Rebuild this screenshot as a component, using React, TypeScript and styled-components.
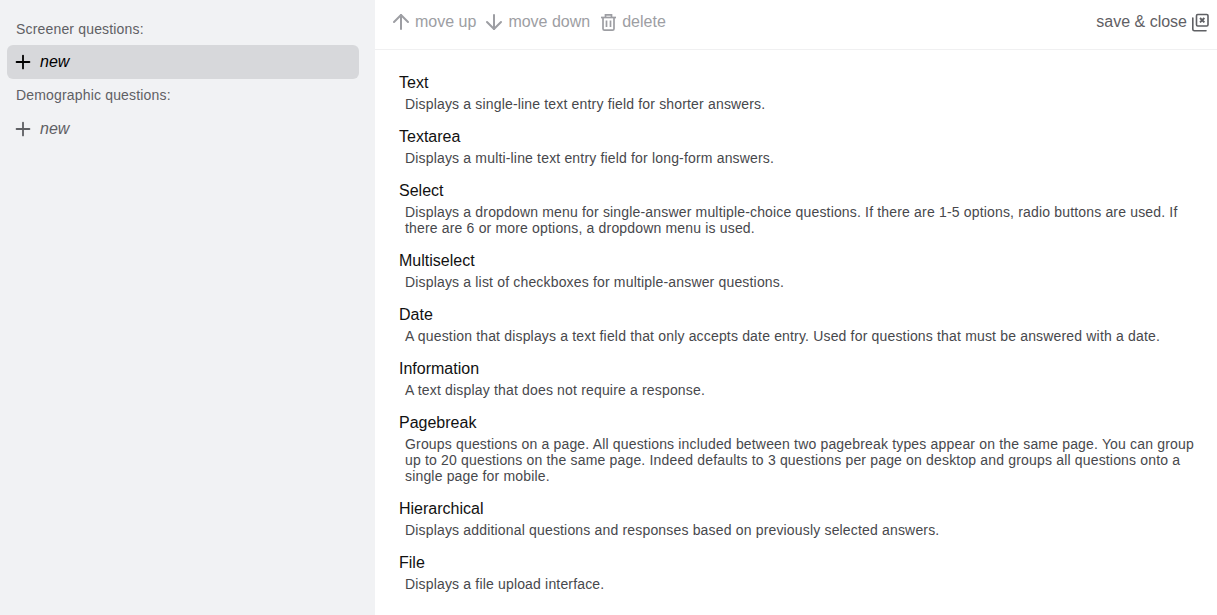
import React from 'react';
import styled, { createGlobalStyle } from 'styled-components';
import { ArrowDown, ArrowUp, Plus } from 'lucide-react';

const GlobalStyle = createGlobalStyle`
  html, body {
    margin: 0;
    padding: 0;
    height: 100%;
    overflow: hidden;
    background: #fff;
    font-family: "Liberation Sans", Arial, sans-serif;
  }
`;

const questionTypes = [
  { title: 'Text', text: 'Displays a single-line text entry field for shorter answers.' },
  { title: 'Textarea', text: 'Displays a multi-line text entry field for long-form answers.' },
  {
    title: 'Select',
    text: 'Displays a dropdown menu for single-answer multiple-choice questions. If there are 1-5 options, radio buttons are used. If there are 6 or more options, a dropdown menu is used.',
  },
  { title: 'Multiselect', text: 'Displays a list of checkboxes for multiple-answer questions.' },
  {
    title: 'Date',
    text: 'A question that displays a text field that only accepts date entry. Used for questions that must be answered with a date.',
  },
  { title: 'Information', text: 'A text display that does not require a response.' },
  {
    title: 'Pagebreak',
    text: 'Groups questions on a page. All questions included between two pagebreak types appear on the same page. You can group up to 20 questions on the same page. Indeed defaults to 3 questions per page on desktop and groups all questions onto a single page for mobile.',
  },
  { title: 'Hierarchical', text: 'Displays additional questions and responses based on previously selected answers.' },
  { title: 'File', text: 'Displays a file upload interface.' },
];

const TrashIcon = () => (
  <svg width="24" height="24" viewBox="0 0 24 24" fill="none" stroke="currentColor" strokeWidth="1.7">
    <path d="M5 7.5h15" />
    <path d="M9.5 7.5V4.8h6v2.7" />
    <path d="M7 7.5v11.2a1.5 1.5 0 0 0 1.5 1.5h8a1.5 1.5 0 0 0 1.5-1.5V7.5" />
    <path d="M10.5 10.5v6.5M14.5 10.5v6.5" />
  </svg>
);

const SaveCloseIcon = () => (
  <svg width="20" height="20" viewBox="0 0 20 20" fill="none" stroke="currentColor">
    <path d="M2.8 6v11.2a1.6 1.6 0 0 0 1.6 1.6H16" strokeWidth="1.6" strokeLinecap="round" />
    <rect x="6.5" y="2.5" width="11.5" height="11.5" rx="1.2" strokeWidth="1.6" />
    <path d="M10 6l4.4 4.4M14.4 6L10 10.4" strokeWidth="1.9" />
  </svg>
);

export default function App() {
  return (
    <>
      <GlobalStyle />
      <Page>
        <Sidebar>
          <SectionLabel>Screener questions:</SectionLabel>
          <NewItem $active>
            <Plus size={22} strokeWidth={2} />
            <em>new</em>
          </NewItem>
          <SectionLabel>Demographic questions:</SectionLabel>
          <NewItem>
            <Plus size={22} strokeWidth={2} />
            <em>new</em>
          </NewItem>
        </Sidebar>
        <Main>
          <Toolbar>
            <ToolGroup>
              <ToolButton>
                <ArrowUp size={24} strokeWidth={2} />
                move up
              </ToolButton>
              <ToolButton>
                <ArrowDown size={24} strokeWidth={2} />
                move down
              </ToolButton>
              <ToolButton>
                <TrashIcon />
                delete
              </ToolButton>
            </ToolGroup>
            <SaveButton>
              save &amp; close
              <SaveCloseIcon />
            </SaveButton>
          </Toolbar>
          <TypeList>
            {questionTypes.map((item) => (
              <TypeItem key={item.title}>
                <TypeTitle>{item.title}</TypeTitle>
                <TypeText>{item.text}</TypeText>
              </TypeItem>
            ))}
          </TypeList>
        </Main>
      </Page>
    </>
  );
}

const Page = styled.div`
  display: flex;
  width: 100%;
  height: 100vh;
`;

const Sidebar = styled.aside`
  flex: 0 0 375px;
  box-sizing: border-box;
  padding: 20px 16px 0 7px;
  background: #f1f2f4;
`;

const SectionLabel = styled.div`
  padding-left: 9px;
  font-size: 14px;
  line-height: 18px;
  letter-spacing: 0.17px;
  color: #5f6064;
  margin-bottom: 7px;
`;

const NewItem = styled.div<{ $active?: boolean }>`
  display: flex;
  align-items: center;
  gap: 6px;
  height: 34px;
  padding-left: 5px;
  margin-top: ${(p) => (p.$active ? '0' : '8px')};
  margin-bottom: 7px;
  border-radius: 6px;
  font-size: 16px;
  background: ${(p) => (p.$active ? '#d7d8db' : 'transparent')};
  color: ${(p) => (p.$active ? '#000' : '#5f6064')};

  em {
    font-style: italic;
  }
`;

const Main = styled.main`
  flex: 1;
  min-width: 0;
`;

const Toolbar = styled.div`
  display: flex;
  align-items: center;
  justify-content: space-between;
  box-sizing: border-box;
  height: 50px;
  padding: 0 7px 5px 14px;
  border-bottom: 1px solid #f0f0f1;
`;

const ToolGroup = styled.div`
  display: flex;
  gap: 6px;
`;

const ToolButton = styled.div`
  display: flex;
  align-items: center;
  gap: 2px;
  font-size: 16px;
  color: #9d9ea3;
`;

const SaveButton = styled.div`
  display: flex;
  align-items: center;
  gap: 3px;
  font-size: 16px;
  color: #5f6064;
`;

const TypeList = styled.div`
  padding: 22px 16px 0 24px;
`;

const TypeItem = styled.div`
  margin-bottom: 14px;
`;

const TypeTitle = styled.div`
  font-size: 16px;
  line-height: 22px;
  margin-bottom: 2px;
  color: #111;
`;

const TypeText = styled.div`
  padding-left: 6px;
  font-size: 14px;
  line-height: 16px;
  letter-spacing: 0.17px;
  color: #47484c;
`;
